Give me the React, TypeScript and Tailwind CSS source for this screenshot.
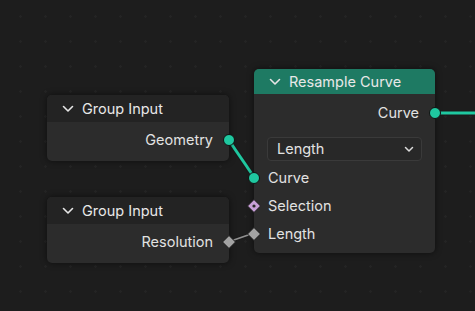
import type { ReactNode } from 'react';

function Chevron() {
    return (
        <svg width="12" height="8" viewBox="0 0 12 8" className="shrink-0">
            <path d="M1.5 1.5 L6 6 L10.5 1.5" fill="none" stroke="#e6e6e6" strokeWidth="1.6" strokeLinecap="round" strokeLinejoin="round" />
        </svg>
    );
}

function Circle({ color = '#1fc8a0' }: { color?: string }) {
    return <span className="block h-[12px] w-[12px] rounded-full border border-[#111] " style={{ background: color }} />;
}

function Diamond({ color, dot }: { color: string; dot?: boolean }) {
    return (
        <svg width="16" height="16" viewBox="0 0 16 16">
            <path d="M8 1.5 L14.5 8 L8 14.5 L1.5 8 Z" fill={color} stroke="#1a1a1a" strokeWidth="1" />
            {dot && <circle cx="8" cy="8" r="1.6" fill="#2a2a2a" />}
        </svg>
    );
}

function NodeHeader({ title, green }: { title: string; green?: boolean }) {
    return (
        <div
            className={`flex items-center gap-[8px] pl-[15px] rounded-t-[5px] ${
                green ? 'h-[25px] bg-[#1e7a63]' : 'h-[27px] bg-[#232323]'
            }`}
        >
            <Chevron />
            <span className="text-[14.5px] text-[#e8e8e8]">{title}</span>
        </div>
    );
}

function GroupInput({ top, label, socket }: { top: number; label: string; socket: ReactNode }) {
    return (
        <div
            className="absolute left-[47px] w-[182px] rounded-[5px] bg-[#2c2c2c] shadow-[0_0_6px_rgba(0,0,0,0.55)]"
            style={{ top }}
        >
            <NodeHeader title="Group Input" />
            <div className="pb-[10px] pt-[6px]">
                <div className="relative flex h-[23px] items-center justify-end pr-[16px]">
                    <span className="text-[14.5px] text-[#e2e2e2]">{label}</span>
                    <div className="absolute right-[-8px] top-1/2 flex h-[16px] w-[16px] -translate-y-1/2 items-center justify-center">
                        {socket}
                    </div>
                </div>
            </div>
        </div>
    );
}

function InputRow({ label, socket }: { label: string; socket: ReactNode }) {
    return (
        <div className="relative flex h-[28px] items-center pl-[14px]">
            <div className="absolute left-[-8px] top-1/2 flex h-[16px] w-[16px] -translate-y-1/2 items-center justify-center">
                {socket}
            </div>
            <span className="text-[14.5px] text-[#e2e2e2]">{label}</span>
        </div>
    );
}

export default function App() {
    return (
        <div
            className="relative h-[311px] w-[475px] overflow-hidden bg-[#1d1d1d] font-['Inter',sans-serif] bg-[radial-gradient(circle,#242424_1px,transparent_1.5px)] bg-[length:25px_25px] bg-[position:8px_4px]"
        >
            {/* links */}
            <svg className="absolute inset-0" width="475" height="311">
                <line x1="228" y1="139" x2="254" y2="177" stroke="#1a1a1a" strokeWidth="5" />
                <line x1="228" y1="139" x2="254" y2="177" stroke="#1fc8a0" strokeWidth="3" />
                <line x1="435" y1="113" x2="475" y2="113" stroke="#1a1a1a" strokeWidth="5" />
                <line x1="435" y1="113" x2="475" y2="113" stroke="#1fc8a0" strokeWidth="3" />
                <line x1="228" y1="242" x2="254" y2="233" stroke="#1a1a1a" strokeWidth="3.5" />
                <line x1="228" y1="242" x2="254" y2="233" stroke="#8f8f8f" strokeWidth="1.8" />
            </svg>

            <GroupInput top={95} label="Geometry" socket={<Circle />} />
            <GroupInput top={197} label="Resolution" socket={<Diamond color="#a3a3a3" />} />

            <div className="absolute left-[254px] top-[69px] w-[181px] rounded-[5px] bg-[#2c2c2c] shadow-[0_0_6px_rgba(0,0,0,0.55)]">
                <NodeHeader title="Resample Curve" green />
                <div className="relative flex h-[38px] items-center justify-end pr-[16px]">
                    <span className="text-[14.5px] text-[#e2e2e2]">Curve</span>
                    <div className="absolute right-[-8px] top-1/2 flex h-[16px] w-[16px] -translate-y-1/2 items-center justify-center">
                        <Circle />
                    </div>
                </div>
                <div className="px-[13px] pb-[3px] pt-[5px]">
                    <div className="flex h-[24px] items-center justify-between rounded-[4px] border border-[#3a3a3a] bg-[#282828] pl-[9px] pr-[7px]">
                        <span className="text-[14.5px] text-[#e2e2e2]">Length</span>
                        <svg width="10" height="7" viewBox="0 0 10 7">
                            <path d="M1.5 1.5 L5 5 L8.5 1.5" fill="none" stroke="#dcdcdc" strokeWidth="1.5" strokeLinecap="round" strokeLinejoin="round" />
                        </svg>
                    </div>
                </div>
                <div className="pb-[5px]">
                    <InputRow label="Curve" socket={<Circle />} />
                    <InputRow label="Selection" socket={<Diamond color="#c8a0d8" dot />} />
                    <InputRow label="Length" socket={<Diamond color="#a3a3a3" />} />
                </div>
            </div>
        </div>
    );
}
